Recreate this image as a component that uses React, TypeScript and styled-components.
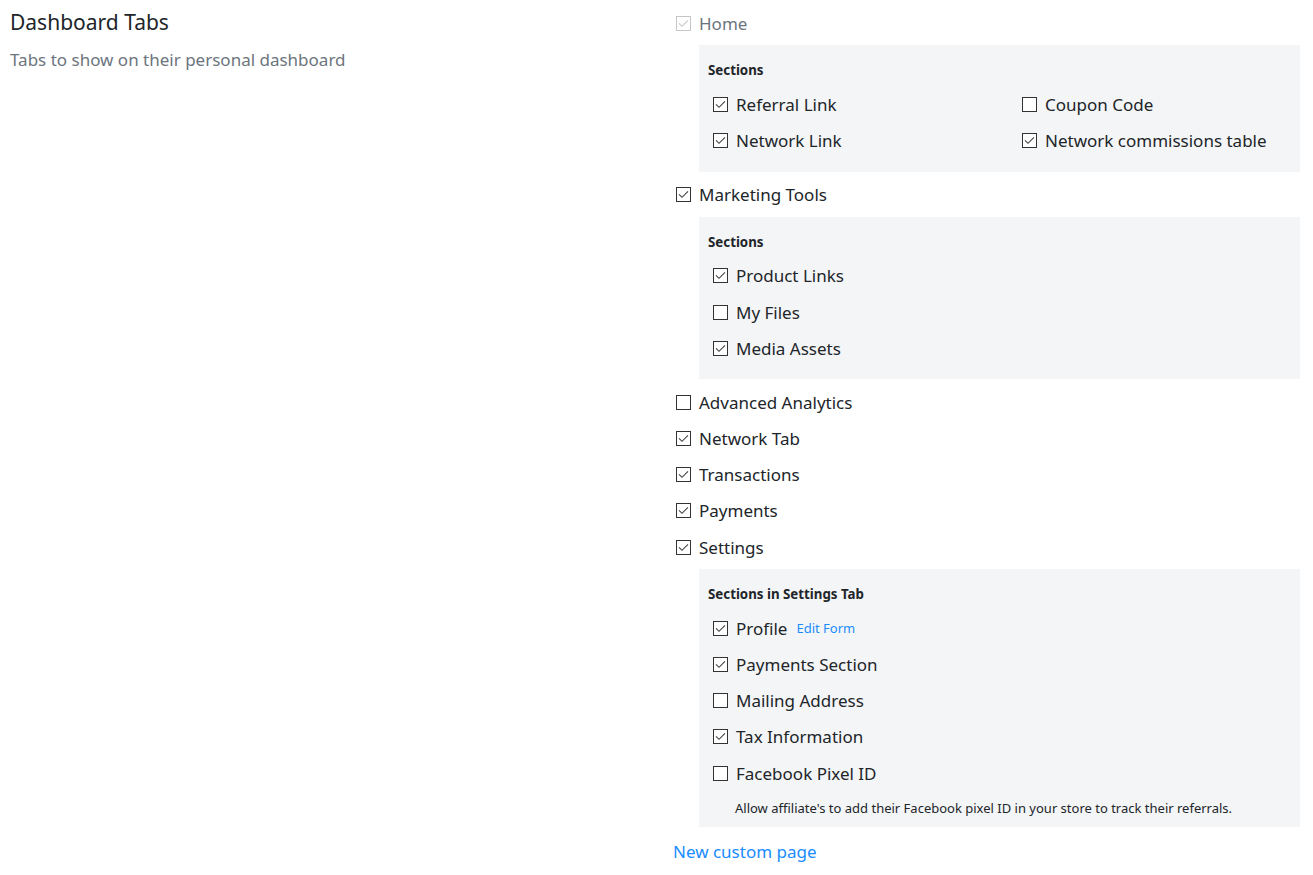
import React from 'react';
import styled, { createGlobalStyle } from 'styled-components';

const GlobalStyle = createGlobalStyle`
  body {
    margin: 0;
    background: #fff;
    font-family: "Noto Sans", "Open Sans", sans-serif;
    color: #212529;
  }
`;

const Page = styled.div`
  display: grid;
  grid-template-columns: 663px 627px;
  padding: 5px 0 0 10px;
`;

const Intro = styled.div`
  padding-top: 3px;
`;

const Title = styled.h2`
  margin: 0;
  font-size: 21px;
  font-weight: 400;
  line-height: 28px;
  color: #212529;
`;

const Subtitle = styled.p`
  margin: 12px 0 0;
  font-size: 17px;
  line-height: 24px;
  color: #6c757d;
`;

const Options = styled.div`
  display: flex;
  flex-direction: column;
`;

const Row = styled.label<{ $inner?: boolean; $disabled?: boolean }>`
  display: flex;
  align-items: center;
  height: 36.2px;
  padding-left: ${p => (p.$inner ? '5px' : '3px')};
  font-size: 17px;
  color: ${p => (p.$disabled ? '#6c757d' : '#212529')};
  white-space: nowrap;
`;

const Box = styled.span<{ $disabled?: boolean }>`
  width: 15px;
  height: 15px;
  flex: none;
  box-sizing: border-box;
  border: 1px solid ${p => (p.$disabled ? '#c6c6c6' : '#333')};
  background: #fff;
  margin-right: 8px;
  display: flex;
  align-items: center;
  justify-content: center;
`;

const Panel = styled.div`
  margin: 4px 0 5px 26px;
  padding: 16px 9px 13px;
  background: #f4f5f7;
`;

const PanelTitle = styled.div`
  font-size: 13.3px;
  font-weight: 700;
  line-height: 18px;
`;

const PanelRows = styled.div<{ $cols?: number }>`
  display: grid;
  grid-template-columns: ${p => (p.$cols === 2 ? '309px 1fr' : '1fr')};
  margin-top: 7px;
`;

const EditLink = styled.a`
  margin-left: 9px;
  font-size: 13px;
  color: #1a8cff;
  text-decoration: none;
`;

const Help = styled.div`
  padding: 9px 0 0 27px;
  margin-bottom: -2px;
  font-size: 13px;
  line-height: 16px;
  color: #212529;
`;

const NewPage = styled.a`
  display: block;
  margin-top: 2px;
  font-size: 17px;
  line-height: 36px;
  color: #1a8cff;
  text-decoration: none;
`;

const Check = ({ checked, disabled }: { checked?: boolean; disabled?: boolean }) => (
  <Box $disabled={disabled}>
    {checked && (
      <svg width="11" height="9" viewBox="0 0 11 9">
        <path d="M1 4.3 L4 7.3 L10 1.3" fill="none" stroke={disabled ? '#c6c6c6' : '#444'} strokeWidth="1.1" />
      </svg>
    )}
  </Box>
);

type Item = { label: string; checked?: boolean; extra?: React.ReactNode };

const Option = ({ label, checked, inner, disabled, extra }: Item & { inner?: boolean; disabled?: boolean }) => (
  <Row $inner={inner} $disabled={disabled}>
    <Check checked={checked} disabled={disabled} />
    {label}
    {extra}
  </Row>
);

const Sections = ({ title, items, cols, children }: { title: string; items: Item[]; cols?: number; children?: React.ReactNode }) => (
  <Panel>
    <PanelTitle>{title}</PanelTitle>
    <PanelRows $cols={cols}>
      {items.map(i => (
        <Option key={i.label} inner {...i} />
      ))}
    </PanelRows>
    {children}
  </Panel>
);

const homeItems: Item[] = [
  { label: 'Referral Link', checked: true },
  { label: 'Coupon Code' },
  { label: 'Network Link', checked: true },
  { label: 'Network commissions table', checked: true },
];

const marketingItems: Item[] = [
  { label: 'Product Links', checked: true },
  { label: 'My Files' },
  { label: 'Media Assets', checked: true },
];

const settingsItems: Item[] = [
  { label: 'Profile', checked: true, extra: <EditLink href="#">Edit Form</EditLink> },
  { label: 'Payments Section', checked: true },
  { label: 'Mailing Address' },
  { label: 'Tax Information', checked: true },
  { label: 'Facebook Pixel ID' },
];

const App = () => (
  <>
    <GlobalStyle />
    <Page>
      <Intro>
        <Title>Dashboard Tabs</Title>
        <Subtitle>Tabs to show on their personal dashboard</Subtitle>
      </Intro>
      <Options>
        <Option label="Home" checked disabled />
        <Sections title="Sections" items={homeItems} cols={2} />
        <Option label="Marketing Tools" checked />
        <Sections title="Sections" items={marketingItems} />
        <Option label="Advanced Analytics" />
        <Option label="Network Tab" checked />
        <Option label="Transactions" checked />
        <Option label="Payments" checked />
        <Option label="Settings" checked />
        <Sections title="Sections in Settings Tab" items={settingsItems}>
          <Help>Allow affiliate's to add their Facebook pixel ID in your store to track their referrals.</Help>
        </Sections>
        <NewPage href="#">New custom page</NewPage>
      </Options>
    </Page>
  </>
);

export default App;
